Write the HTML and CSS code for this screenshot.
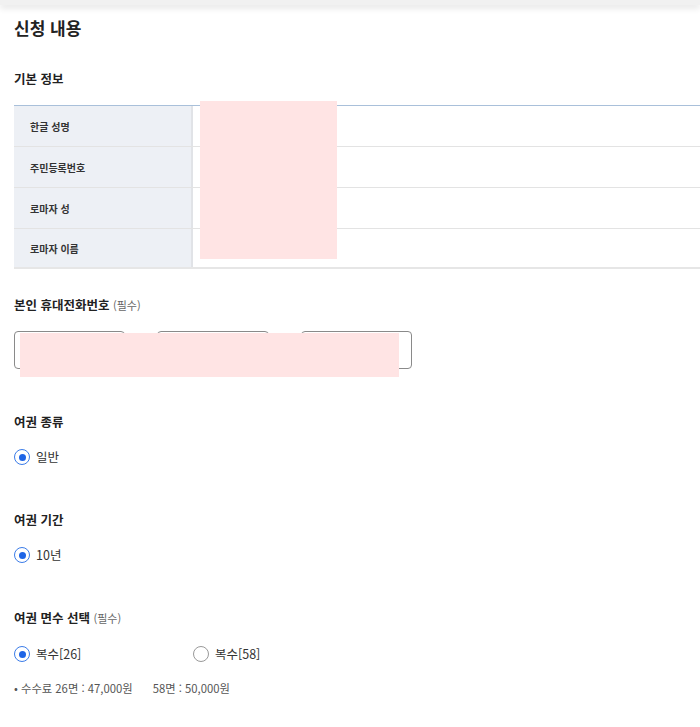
FILE: index.html
```html
<!DOCTYPE html>
<html lang="ko">
<head>
<meta charset="utf-8">
<link rel="stylesheet" href="styles.css">
</head>
<body>
<div class="topbar"></div>
<main class="page">
  <h1 class="title">신청 내용</h1>
  <h2 class="sub">기본 정보</h2>
  <div class="table-wrap">
    <div class="info-table">
      <div class="row"><div class="th">한글 성명</div><div class="td"></div></div>
      <div class="row"><div class="th">주민등록번호</div><div class="td"></div></div>
      <div class="row"><div class="th">로마자 성</div><div class="td"></div></div>
      <div class="row"><div class="th">로마자 이름</div><div class="td"></div></div>
    </div>
    <div class="redact redact-table"></div>
  </div>

  <h2 class="sub sub-phone">본인 휴대전화번호 <span class="req">(필수)</span></h2>
  <div class="phone-wrap">
    <div class="phone">
      <div class="inp"></div>
      <div class="inp"></div>
      <div class="inp"></div>
    </div>
    <div class="redact redact-phone"></div>
  </div>

  <h2 class="sub sub-type">여권 종류</h2>
  <div class="radios">
    <label class="radio"><span class="dot on"></span>일반</label>
  </div>

  <h2 class="sub sub-period">여권 기간</h2>
  <div class="radios">
    <label class="radio"><span class="dot on"></span>10년</label>
  </div>

  <h2 class="sub sub-pages">여권 면수 선택 <span class="req">(필수)</span></h2>
  <div class="radios two">
    <label class="radio"><span class="dot on"></span>복수[26]</label>
    <label class="radio"><span class="dot"></span>복수[58]</label>
  </div>
  <p class="note">• 수수료 26면 : 47,000원<span class="gap"></span>58면 : 50,000원</p>
</main>
</body>
</html>
```
FILE: styles.css
```css
* { box-sizing: border-box; }
html, body { margin: 0; padding: 0; background: #fff; }
body {
  font-family: "Noto Sans CJK KR", "Noto Sans", sans-serif;
  color: #222;
  width: 700px;
  overflow: hidden;
}
.topbar {
  height: 5px;
  background: #f1f1f1;
  box-shadow: 0 3px 6px rgba(0,0,0,0.12);
}
.page { padding: 0 0 0 14px; }
.title {
  margin: 11px 0 0;
  font-size: 17px;
  line-height: 24px;
  font-weight: 700;
  color: #222;
}
.sub {
  margin: 0;
  font-size: 12.5px;
  line-height: 18px;
  font-weight: 700;
  color: #222;
}
.title + .sub { margin-top: 30px; }
.req { font-size: 11px; font-weight: 400; color: #666; }

.table-wrap { position: relative; margin-top: 17px; }
.info-table { border-top: 1px solid #a9c0da; }
.row { display: flex; height: 41px; border-bottom: 1px solid #e3e3e3; }
.row:last-child { border-bottom: 2px solid #e6e6e6; height: 40px; }
.th {
  width: 179px;
  background: #edf0f5;
  border-right: 2px solid #e1e3e7;
  padding-left: 16px;
  display: flex;
  align-items: center;
  font-size: 10px;
  font-weight: 700;
  color: #333;
}
.td { flex: 1; }
.redact { position: absolute; background: #ffe4e4; }
.redact-table { left: 186px; top: -4px; width: 137px; height: 158px; }

.sub-phone { margin-top: 27px; }
.phone-wrap { position: relative; margin-top: 17px; width: 398px; }
.phone { display: flex; gap: 32px; }
.inp {
  flex: 1;
  height: 38px;
  border: 1px solid #8a8a8a;
  border-radius: 4px;
}
.redact-phone { left: 6px; top: 2px; width: 379px; height: 44px; }

.radios { display: flex; margin-top: 17px; }
.radios.two { margin-top: 18px; }
.radio {
  display: flex;
  align-items: center;
  font-size: 12.5px;
  line-height: 18px;
  color: #333;
}
.radios.two .radio { width: 179px; }
.dot {
  width: 16px;
  height: 16px;
  border-radius: 50%;
  border: 1.5px solid #999;
  margin-right: 6px;
  position: relative;
  flex: none;
}
.dot.on { border-color: #3b7ce8; }
.dot.on::after {
  content: "";
  position: absolute;
  left: 50%; top: 50%;
  width: 7px; height: 7px;
  margin: -3.5px 0 0 -3.5px;
  border-radius: 50%;
  background: #1d64e6;
}
.sub-type { margin-top: 44px; }
.sub-period { margin-top: 45px; }
.sub-pages { margin-top: 45px; }
.note {
  margin: 17px 0 0;
  font-size: 11.3px;
  line-height: 16px;
  color: #555;
}
.gap { display: inline-block; width: 20px; }
```
